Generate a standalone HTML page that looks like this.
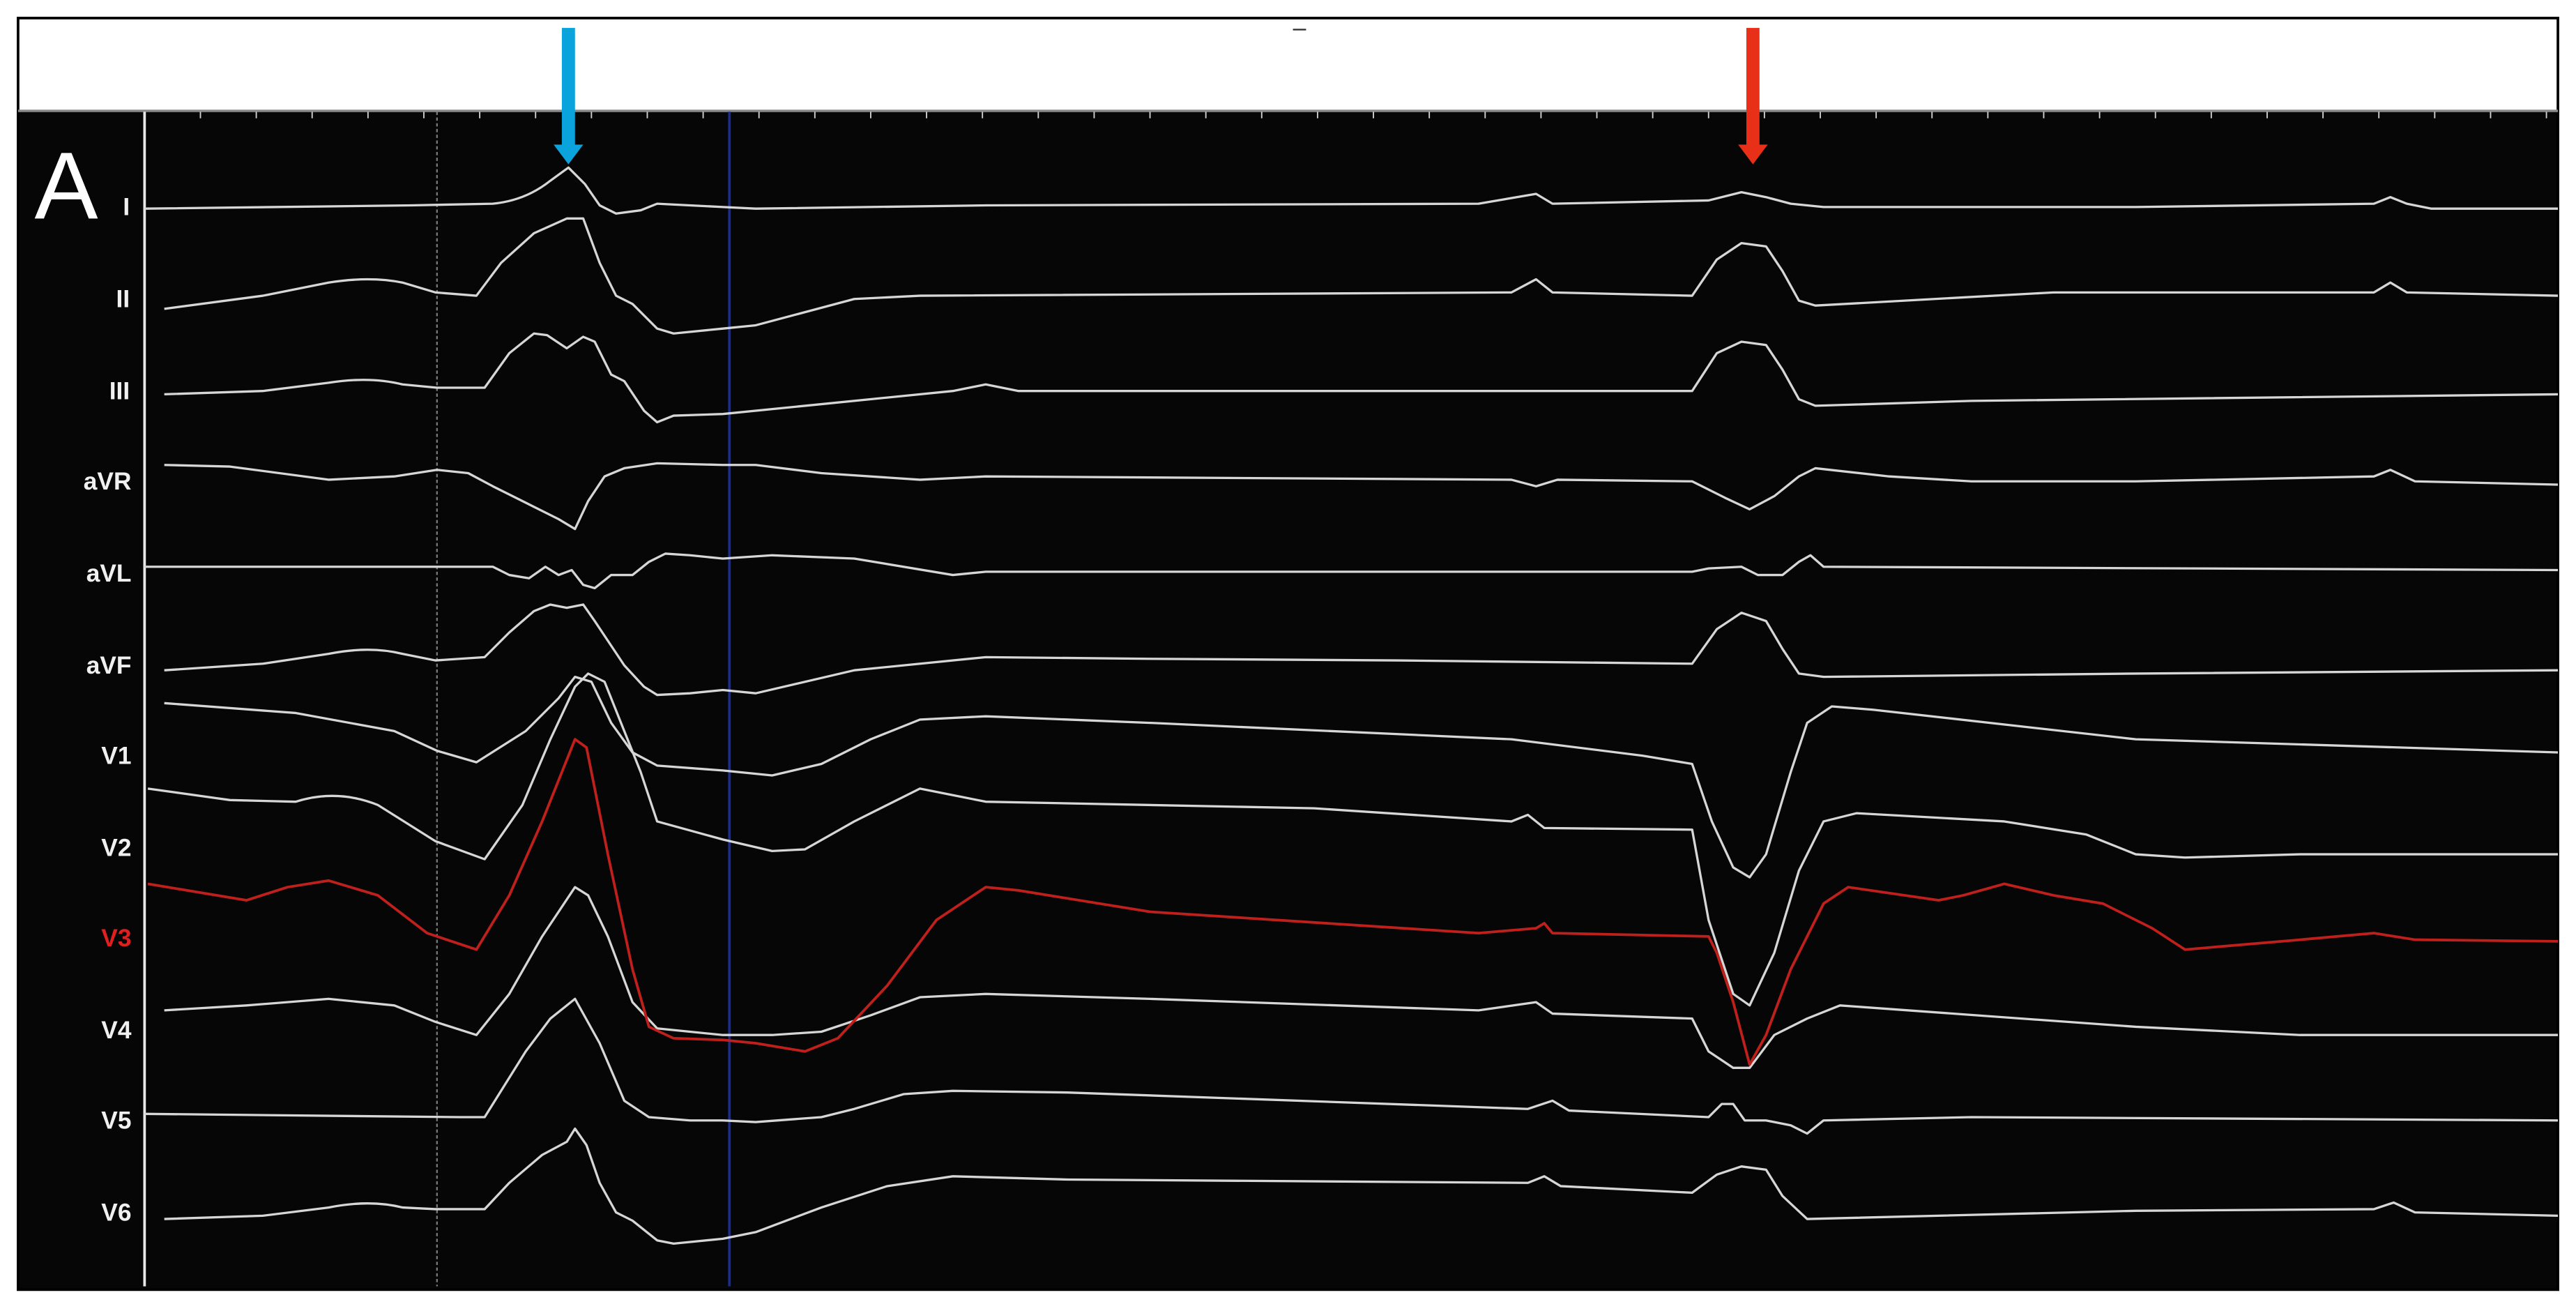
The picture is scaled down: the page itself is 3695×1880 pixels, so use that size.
<!DOCTYPE html>
<html><head><meta charset="utf-8"><style>
html,body{margin:0;padding:0;background:#fff;}
svg{display:block;}
</style></head><body>
<svg width="3695" height="1880" viewBox="0 0 1568 798" xmlns="http://www.w3.org/2000/svg" preserveAspectRatio="none">
<rect x="0" y="0" width="1568" height="798" fill="#fff"/>
<rect x="11" y="67" width="1546" height="718" fill="#060606"/>
<rect x="11" y="11" width="1546" height="774" fill="none" stroke="#000" stroke-width="1.6"/>
<line x1="11" y1="67.5" x2="1557" y2="67.5" stroke="#8a8a8a" stroke-width="1.5"/>
<g stroke="#cfcfcf" stroke-width="0.8">
<path d="M122,68v4M156,68v4M190,68v4M224,68v4M258,68v4M292,68v4M326,68v4M360,68v4M394,68v4M428,68v4M462,68v4M496,68v4M530,68v4M564,68v4M598,68v4M632,68v4M666,68v4M700,68v4M734,68v4M768,68v4M802,68v4M836,68v4M870,68v4M904,68v4M938,68v4M972,68v4M1006,68v4M1040,68v4M1074,68v4M1108,68v4M1142,68v4M1176,68v4M1210,68v4M1244,68v4M1278,68v4M1312,68v4M1346,68v4M1380,68v4M1414,68v4M1448,68v4M1482,68v4M1516,68v4M1550,68v4"/>
</g>
<line x1="88" y1="68" x2="88" y2="783" stroke="#e8e8e8" stroke-width="1.6"/>
<line x1="266" y1="68" x2="266" y2="783" stroke="#777" stroke-width="1" stroke-dasharray="2,1.5"/>
<line x1="444" y1="68" x2="444" y2="783" stroke="#1c2c8c" stroke-width="1.6"/>
<line x1="787" y1="18" x2="795" y2="18" stroke="#333" stroke-width="1"/>
<!-- arrows -->
<rect x="342" y="17" width="8" height="72" fill="#0aa3dc"/>
<path d="M337,88 L355,88 L346,100 Z" fill="#0aa3dc"/>
<rect x="1063" y="17" width="8" height="72" fill="#e83018"/>
<path d="M1058,88 L1076,88 L1067,100 Z" fill="#e83018"/>
<text x="21" y="133" fill="#fff" font-family="Liberation Sans, sans-serif" font-size="58">A</text>
<g font-family="Liberation Sans, sans-serif" font-weight="bold" font-size="15" fill="#f0f0f0" text-anchor="end">
<text x="79" y="131">I</text>
<text x="79" y="187">II</text>
<text x="79" y="243">III</text>
<text x="80" y="298">aVR</text>
<text x="80" y="354">aVL</text>
<text x="80" y="410">aVF</text>
<text x="80" y="465">V1</text>
<text x="80" y="521">V2</text>
<text x="80" y="576" fill="#e02020">V3</text>
<text x="80" y="632">V4</text>
<text x="80" y="687">V5</text>
<text x="80" y="743">V6</text>
</g>
<g fill="none" stroke="#d6d6d6" stroke-width="1.4" stroke-linejoin="round">
<path d="M88,127 L250,125 L300,124 Q320,122 335,110 L346,102 L356,112 L365,125 L375,130 L390,128 L400,124 L440,126 L460,127 L600,125 L900,124 L935,118 L945,124 L1040,122 L1060,117 L1075,120 L1090,124 L1100,125 L1110,126 L1300,126 L1445,124 L1455,120 L1465,124 L1480,127 L1557,127"/>
<path d="M100,188 L160,180 L200,172 Q225,168 245,172 L265,178 L290,180 L305,160 L325,142 L345,133 L355,133 L365,160 L375,180 L385,185 L400,200 L410,203 L440,200 L460,198 L490,190 L520,182 L560,180 L920,178 L935,170 L945,178 L1030,180 L1045,158 L1060,148 L1075,150 L1085,165 L1095,183 L1105,186 L1250,178 L1445,178 L1455,172 L1465,178 L1557,180"/>
<path d="M100,240 L160,238 L200,233 Q225,229 245,234 L266,236 L295,236 L310,215 L325,203 L333,204 L345,212 L355,205 L362,208 L372,228 L380,232 L392,250 L400,257 L410,253 L440,252 L500,246 L580,238 L600,234 L620,238 L1030,238 L1045,215 L1060,208 L1075,210 L1085,225 L1095,243 L1105,247 L1200,244 L1557,240"/>
<path d="M100,283 L140,284 L200,292 L240,290 L266,286 L285,288 L300,296 L320,306 L340,316 L350,322 L358,305 L368,290 L380,285 L400,282 L440,283 L460,283 L500,288 L560,292 L600,290 L920,292 L935,296 L948,292 L1030,293 L1050,303 L1065,310 L1080,302 L1095,290 L1105,285 L1150,290 L1200,293 L1300,293 L1445,290 L1455,286 L1470,293 L1557,295"/>
<path d="M88,345 L290,345 L300,345 L310,350 L322,352 L332,345 L340,350 L348,347 L355,356 L362,358 L372,350 L385,350 L395,342 L405,337 L420,338 L440,340 L470,338 L520,340 L580,350 L600,348 L1030,348 L1040,346 L1060,345 L1070,350 L1085,350 L1095,342 L1102,338 L1110,345 L1557,347"/>
<path d="M100,408 L160,404 L200,398 Q225,393 245,398 L265,402 L295,400 L310,385 L325,372 L335,368 L345,370 L355,368 L362,378 L372,393 L380,405 L392,418 L400,423 L420,422 L440,420 L460,422 L520,408 L600,400 L700,401 L850,402 L1030,404 L1045,383 L1060,373 L1075,378 L1085,395 L1095,410 L1110,412 L1300,410 L1557,408"/>
<path d="M100,428 L180,434 L240,445 L266,457 L290,464 L320,445 L340,425 L350,412 L360,415 L372,440 L385,458 L400,466 L440,469 L470,472 L500,465 L530,450 L560,438 L600,436 L700,440 L920,450 L1000,460 L1030,465 L1042,500 L1055,528 L1065,534 L1075,520 L1090,470 L1100,440 L1115,430 L1140,432 L1300,450 L1557,458"/>
<path d="M90,480 L140,487 L180,488 Q205,480 230,490 L265,512 L295,523 L318,490 L335,450 L350,418 L358,410 L368,415 L378,440 L390,470 L400,500 L440,511 L470,518 L490,517 L520,500 L560,480 L600,488 L800,492 L920,500 L930,496 L940,504 L1030,505 L1040,560 L1055,605 L1065,612 L1080,580 L1095,530 L1110,500 L1130,495 L1220,500 L1270,508 L1300,520 L1330,522 L1400,520 L1557,520"/>
<path d="M100,615 L150,612 L200,608 L240,612 L265,622 L290,630 L310,605 L330,570 L350,540 L358,545 L370,570 L385,610 L400,626 L440,630 L470,630 L500,628 L530,618 L560,607 L600,605 L700,608 L900,615 L935,610 L945,617 L1030,620 L1040,640 L1055,650 L1065,650 L1080,630 L1100,620 L1120,612 L1300,625 L1400,630 L1557,630"/>
<path d="M88,678 L280,680 L295,680 L320,640 L335,620 L350,608 L365,635 L380,670 L395,680 L420,682 L440,682 L460,683 L500,680 L520,675 L550,666 L580,664 L650,665 L930,675 L945,670 L955,676 L1040,680 L1048,672 L1055,672 L1062,682 L1075,682 L1090,685 L1100,690 L1110,682 L1200,680 L1557,682"/>
<path d="M100,742 L160,740 L200,735 Q225,730 245,735 L265,736 L295,736 L310,720 L330,703 L345,695 L350,687 L357,697 L365,720 L375,738 L385,743 L400,755 L410,757 L440,754 L460,750 L500,735 L540,722 L580,716 L650,718 L930,720 L940,716 L950,722 L1030,726 L1045,715 L1060,710 L1075,712 L1085,728 L1100,742 L1300,737 L1445,736 L1457,732 L1470,738 L1557,740"/>
</g>
<path fill="none" stroke="#c0201c" stroke-width="1.6" stroke-linejoin="round" d="M90,538 L120,543 L150,548 L175,540 L200,536 L230,545 L260,568 L290,578 L310,545 L330,500 L350,450 L357,455 L370,520 L385,590 L395,625 L410,632 L440,633 L460,635 L490,640 L510,632 L540,600 L570,560 L600,540 L620,542 L700,555 L900,568 L935,565 L940,562 L945,568 L1040,570 L1045,580 L1055,610 L1065,648 L1075,630 L1090,590 L1110,550 L1125,540 L1180,548 L1195,545 L1220,538 L1250,545 L1280,550 L1310,565 L1330,578 L1400,572 L1445,568 L1470,572 L1557,573"/>
</svg>
</body></html>
